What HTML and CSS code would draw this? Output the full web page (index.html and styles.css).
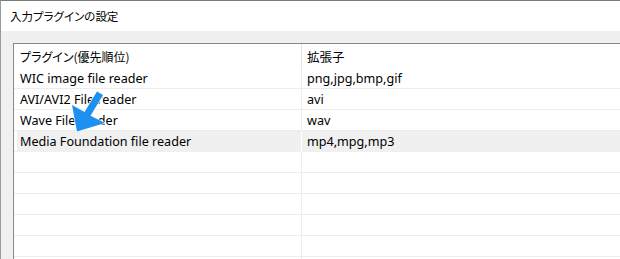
FILE: index.html
```html
<!DOCTYPE html>
<html lang="ja">
<head>
<meta charset="utf-8">
<title>入力プラグインの設定</title>
<link rel="stylesheet" href="styles.css">
</head>
<body>
<div class="window">
  <div class="titlebar">入力プラグインの設定</div>
  <div class="content">
    <div class="listview">
      <div class="row header"><div class="cell c1">プラグイン(優先順位)</div><div class="cell c2">拡張子</div></div>
      <div class="row"><div class="cell c1">WIC image file reader</div><div class="cell c2">png,jpg,bmp,gif</div></div>
      <div class="row"><div class="cell c1">AVI/AVI2 File reader</div><div class="cell c2">avi</div></div>
      <div class="row"><div class="cell c1">Wave File reader</div><div class="cell c2">wav</div></div>
      <div class="row selected"><div class="cell c1">Media Foundation file reader</div><div class="cell c2">mp4,mpg,mp3</div></div>
      <div class="row"><div class="cell c1"></div><div class="cell c2"></div></div>
      <div class="row"><div class="cell c1"></div><div class="cell c2"></div></div>
      <div class="row"><div class="cell c1"></div><div class="cell c2"></div></div>
      <div class="row"><div class="cell c1"></div><div class="cell c2"></div></div>
      <div class="row"><div class="cell c1"></div><div class="cell c2"></div></div>
      <div class="row"><div class="cell c1"></div><div class="cell c2"></div></div>
    </div>
  </div>
  <svg class="arrow" width="620" height="259" viewBox="0 0 620 259" aria-hidden="true">
    <polygon points="97,91.5 103,95 90.5,115.7 105,123 77,131.5 72,105 84.5,112" />
  </svg>
</div>
</body>
</html>
```

FILE: styles.css
```css
html, body {
  margin: 0;
  padding: 0;
  overflow: hidden;
}

body {
  width: 620px;
  height: 259px;
  background: #f0f0f0;
}

.window {
  position: relative;
  box-sizing: border-box;
  width: 620px;
  height: 259px;
  overflow: hidden;
  background: #f0f0f0;
  border-top: 1px solid #7a7a7a;
  border-left: 1px solid #9a9a9a;
}

.titlebar {
  height: 30px;
  padding-left: 9px;
  background: #ffffff;
  color: #000;
  font-family: "Noto Sans CJK JP", sans-serif;
  font-size: 11.5px;
  line-height: 30px;
  font-feature-settings: "palt";
}

.content {
  padding: 12px 0 0 12px;
}

.listview {
  width: 640px;
  background: #ffffff;
  border-top: 1px solid #828790;
  border-left: 1px solid #828790;
  font-family: "Noto Sans", "Noto Sans CJK JP", sans-serif;
  font-size: 12.6px;
  color: #000;
}

.row {
  display: grid;
  grid-template-columns: 287px 1fr;
  box-sizing: border-box;
  height: 21px;
  border-bottom: 1px solid #ececec;
}

.cell {
  box-sizing: border-box;
  height: 20px;
  padding-top: 2px;
  line-height: 18px;
  white-space: nowrap;
  overflow: hidden;
}

.c1 {
  padding-left: 6px;
}

.c2 {
  border-left: 1px solid #ececec;
  padding-left: 5px;
}

.header {
  height: 24px;
  border-bottom: none;
  font-family: "Noto Sans CJK JP", sans-serif;
  font-size: 12px;
  font-feature-settings: "palt";
}

.header .cell {
  height: 24px;
  padding-top: 1px;
  line-height: 23px;
}

.header .c2 {
  font-size: 12.5px;
  border-left-color: #e3e3e3;
}

.selected {
  border-bottom-color: #f0f0f0;
}

.selected .cell {
  background: #f0f0f0;
}

.selected .c1 {
  margin-left: 3px;
  padding-left: 3px;
}

.selected .c2 {
  border-left-color: #ffffff;
}

.arrow {
  position: absolute;
  top: -1px;
  left: -1px;
  pointer-events: none;
}

.arrow polygon {
  fill: #1e90f0;
  stroke: #ffffff;
  stroke-width: 1.2;
  stroke-linejoin: miter;
  paint-order: stroke;
}
```
